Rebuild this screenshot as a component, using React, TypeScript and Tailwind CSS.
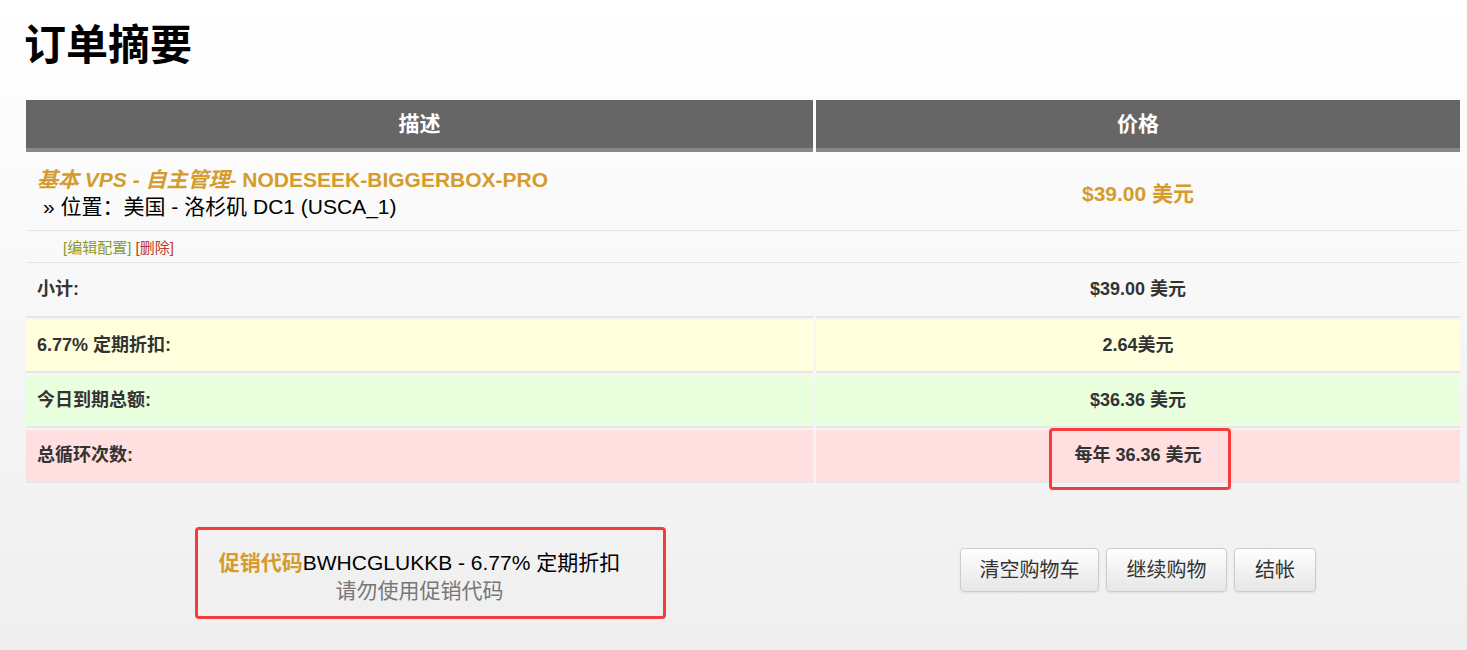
import React from 'react';

const font = { fontFamily: '"Liberation Sans", Arial, "Noto Sans CJK SC", sans-serif' };

type Row = { label: string; value: string; bg: string; highlight?: boolean };

const totals: Row[] = [
  { label: '6.77% 定期折扣:', value: '2.64美元', bg: 'bg-[#ffffdd]' },
  { label: '今日到期总额:', value: '$36.36 美元', bg: 'bg-[#eaffdd]' },
  { label: '总循环次数:', value: '每年 36.36 美元', bg: 'bg-[#ffdfdf]', highlight: true },
];

export default function App() {
  return (
    <div style={font} className="min-h-[650px] bg-linear-to-b from-white to-[#efefef] px-[26px] pt-[21px] text-[#333]">
      <h1 className="text-[42px] leading-[50px] font-bold text-black -ml-[2px]">订单摘要</h1>

      <div className="mt-[29px] w-[1434px]">
        {/* header */}
        <div className="grid grid-cols-[787px_644px] gap-x-[3px]">
          <div className="h-[52px] bg-[#666] border-b-4 border-[#888] flex items-center justify-center text-white font-bold text-[21px]">描述</div>
          <div className="h-[52px] bg-[#666] border-b-4 border-[#888] flex items-center justify-center text-white font-bold text-[21px]">价格</div>
        </div>

        {/* product */}
        <div className="grid grid-cols-[787px_644px] gap-x-[3px] border-b border-[#e6e6e6]">
          <div className="h-[78px] pl-[11px] pt-[14px]">
            <div className="text-[21px] leading-[27px] font-bold text-[#d59b2d]">
              <i>基本 VPS - 自主管理</i>- NODESEEK-BIGGERBOX-PRO
            </div>
            <div className="text-[21px] leading-[27px] text-black pl-[6px]">» 位置：美国 - 洛杉矶 DC1 (USCA_1)</div>
          </div>
          <div className="h-[78px] flex items-center justify-center text-[21px] font-bold text-[#d59b2d] pt-[6px]">$39.00 美元</div>
        </div>

        <div className="grid grid-cols-[787px_644px] gap-x-[3px] border-b border-[#e6e6e6]">
          <div className="h-[31px] pl-[37px] pt-[7px] text-[15px] leading-[19px]">
            <span className="text-[#88992f]">[编辑配置]</span> <span className="text-[#c0392b]">[删除]</span>
          </div>
          <div className="h-[31px]"></div>
        </div>

        {/* subtotal */}
        <div className="grid grid-cols-[787px_644px] gap-x-[3px] mb-[2px]">
          <div className="h-[55px] border-b-2 border-[#e6e6e6] pl-[11px] flex items-center font-bold text-[18px]">小计:</div>
          <div className="h-[55px] border-b-2 border-[#e6e6e6] flex items-center justify-center font-bold text-[18px]">$39.00 美元</div>
        </div>

        {totals.map((r) => (
          <div key={r.label} className="grid grid-cols-[787px_644px] gap-x-[3px] mb-[2px]">
            <div className={`h-[53px] ${r.bg} border-b-2 border-[#e6e6e6] pl-[11px] flex items-center font-bold text-[18px]`}>{r.label}</div>
            <div className={`relative h-[53px] ${r.bg} border-b-2 border-[#e6e6e6] flex items-center justify-center font-bold text-[18px]`}>
              {r.value}
              {r.highlight && (
                <span className="absolute left-[233px] top-[-2px] w-[182px] h-[62px] border-[3px] border-[#f53b3b] rounded-[4px]"></span>
              )}
            </div>
          </div>
        ))}

        {/* promo + actions */}
        <div className="grid grid-cols-[787px_644px] gap-x-[3px] mt-[65px]">
          <div className="relative flex flex-col items-center text-[21px] leading-[28px] pt-[1px]">
            <div className="text-black">
              <span className="font-bold text-[#d59b2d]">促销代码</span>BWHCGLUKKB - 6.77% 定期折扣
            </div>
            <div className="text-[#777]">请勿使用促销代码</div>
            <span className="absolute left-[169px] top-[-21px] w-[471px] h-[92px] border-[3px] border-[#f53b3b] rounded-[4px]"></span>
          </div>
          <div className="flex justify-center gap-[7px]">
            {[
              ['清空购物车', 'w-[139px]'],
              ['继续购物', 'w-[121px]'],
              ['结帐', 'w-[82px]'],
            ].map(([t, w]) => (
              <button
                key={t}
                className={`${w} h-[44px] rounded-[4px] border border-[#ccc] bg-linear-to-b from-white to-[#e6e6e6] text-[20px] text-[#333] shadow-[0_1px_2px_rgba(0,0,0,0.08)]`}
              >
                {t}
              </button>
            ))}
          </div>
        </div>
      </div>
    </div>
  );
}
